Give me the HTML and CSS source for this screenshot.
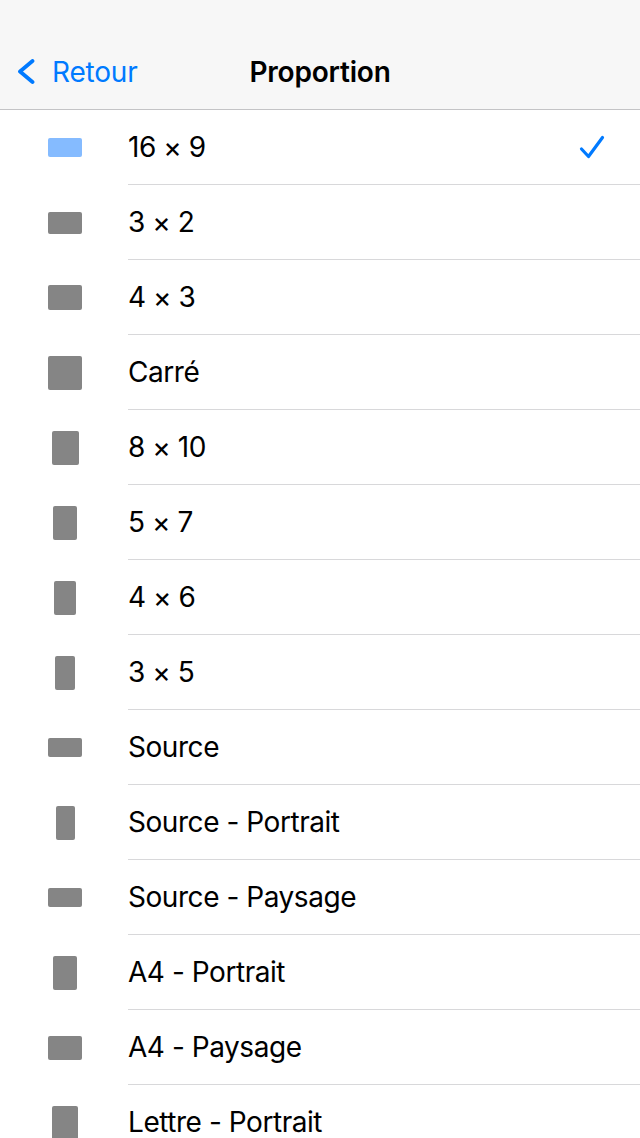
FILE: index.html
```html
<!DOCTYPE html>
<html lang="fr">
<head>
<meta charset="utf-8">
<title>Proportion</title>
<link rel="stylesheet" href="styles.css">
</head>
<body>

<header class="navbar">
	<div class="statusbar"></div>
	<div class="bar">
		<a class="back">
			<svg class="chevron" viewBox="0 0 19 25" width="19" height="25">
				<path d="M16.5 2 L4 12.5 L16.5 23" fill="none" stroke="#007aff" stroke-width="3.8" stroke-linecap="round" stroke-linejoin="round"/>
			</svg>
			<span>Retour</span>
		</a>
		<h1 class="title">Proportion</h1>
	</div>
</header>

<ul class="list">
	<li class="row selected">
		<div class="icon"><i class="shape" style="width:34px;height:19px"></i></div>
		<div class="label"><span>16 × 9</span>
			<svg class="check" viewBox="0 0 26 25" width="26" height="25">
				<path d="M2.5 14 L9.5 21.5 L23.5 2.5" fill="none" stroke="#007aff" stroke-width="3.2" stroke-linecap="round" stroke-linejoin="round"/>
			</svg>
		</div>
	</li>
	<li class="row">
		<div class="icon"><i class="shape" style="width:34px;height:22px"></i></div>
		<div class="label"><span>3 × 2</span></div>
	</li>
	<li class="row">
		<div class="icon"><i class="shape" style="width:34px;height:25px"></i></div>
		<div class="label"><span>4 × 3</span></div>
	</li>
	<li class="row">
		<div class="icon"><i class="shape" style="width:34px;height:34px"></i></div>
		<div class="label"><span>Carré</span></div>
	</li>
	<li class="row">
		<div class="icon"><i class="shape" style="width:27px;height:34px"></i></div>
		<div class="label"><span>8 × 10</span></div>
	</li>
	<li class="row">
		<div class="icon"><i class="shape" style="width:24px;height:34px"></i></div>
		<div class="label"><span>5 × 7</span></div>
	</li>
	<li class="row">
		<div class="icon"><i class="shape" style="width:22px;height:34px"></i></div>
		<div class="label"><span>4 × 6</span></div>
	</li>
	<li class="row">
		<div class="icon"><i class="shape" style="width:20px;height:34px"></i></div>
		<div class="label"><span>3 × 5</span></div>
	</li>
	<li class="row">
		<div class="icon"><i class="shape" style="width:34px;height:19px"></i></div>
		<div class="label"><span>Source</span></div>
	</li>
	<li class="row">
		<div class="icon"><i class="shape" style="width:19px;height:34px"></i></div>
		<div class="label"><span>Source - Portrait</span></div>
	</li>
	<li class="row">
		<div class="icon"><i class="shape" style="width:34px;height:19px"></i></div>
		<div class="label"><span>Source - Paysage</span></div>
	</li>
	<li class="row">
		<div class="icon"><i class="shape" style="width:24px;height:34px"></i></div>
		<div class="label"><span>A4 - Portrait</span></div>
	</li>
	<li class="row">
		<div class="icon"><i class="shape" style="width:34px;height:24px"></i></div>
		<div class="label"><span>A4 - Paysage</span></div>
	</li>
	<li class="row">
		<div class="icon"><i class="shape" style="width:26px;height:34px"></i></div>
		<div class="label"><span>Lettre - Portrait</span></div>
	</li>
</ul>

</body>
</html>
```

FILE: styles.css
```css
body {
	margin: 0;
	background: #fff;
	font-family: Inter, "Noto Sans", "Liberation Sans", sans-serif;
	color: #000;
	overflow: hidden;
}

.navbar {
	background: #f7f7f7;
	border-bottom: 1px solid #c4c4c6;
}
.statusbar { height: 34px; }
.bar {
	height: 75px;
	display: flex;
	align-items: center;
	justify-content: center;
	position: relative;
}
.back {
	position: absolute;
	left: 16px;
	top: 0;
	bottom: 0;
	display: flex;
	align-items: center;
	gap: 17px;
	color: #007aff;
	font-size: 28px;
	letter-spacing: -0.2px;
}
.back .chevron { display: block; }
.title {
	margin: 0;
	font-size: 28px;
	font-weight: 600;
	letter-spacing: -0.2px;
}

.list {
	list-style: none;
	margin: 0;
	padding: 0;
}
.row {
	display: flex;
	height: 75px;
}
.icon {
	width: 34px;
	margin-left: 48px;
	margin-right: 46px;
	display: flex;
	align-items: center;
	justify-content: center;
}
.shape {
	display: block;
	background: #858585;
	border-radius: 2px;
}
.selected .shape { background: #85bbff; }
.label {
	flex: 1;
	display: flex;
	align-items: center;
	justify-content: space-between;
	border-bottom: 1px solid #d8d8da;
	font-size: 28px;
	letter-spacing: -0.45px;
	padding-right: 35px;
}
.check { display: block; }
```
